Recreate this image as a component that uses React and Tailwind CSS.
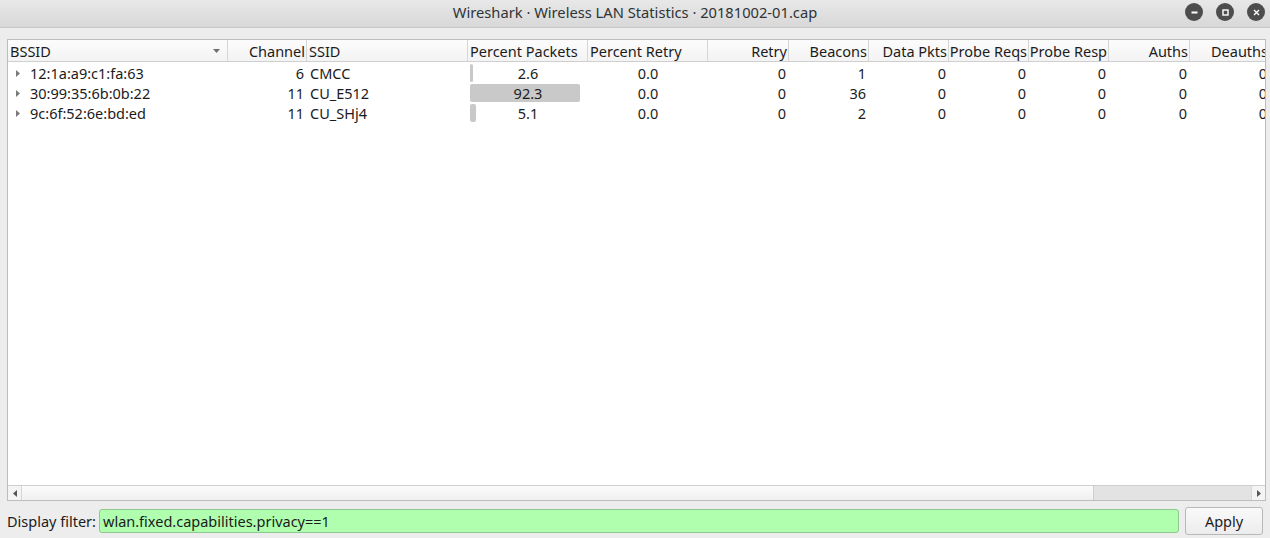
import React from 'react';

const columns = [
    { key: 'bssid', label: 'BSSID', width: 220, align: 'left' },
    { key: 'channel', label: 'Channel', width: 79, align: 'right' },
    { key: 'ssid', label: 'SSID', width: 161, align: 'left' },
    { key: 'pct', label: 'Percent Packets', width: 120, align: 'left' },
    { key: 'retryPct', label: 'Percent Retry', width: 120, align: 'left' },
    { key: 'retry', label: 'Retry', width: 81, align: 'right' },
    { key: 'beacons', label: 'Beacons', width: 80, align: 'right' },
    { key: 'data', label: 'Data Pkts', width: 80, align: 'right' },
    { key: 'probeReq', label: 'Probe Reqs', width: 80, align: 'right' },
    { key: 'probeResp', label: 'Probe Resp', width: 80, align: 'right' },
    { key: 'auths', label: 'Auths', width: 81, align: 'right' },
    { key: 'deauths', label: 'Deauths', width: 80, align: 'right' },
];

const rows = [
    { bssid: '12:1a:a9:c1:fa:63', channel: 6, ssid: 'CMCC', pct: 2.6, beacons: 1 },
    { bssid: '30:99:35:6b:0b:22', channel: 11, ssid: 'CU_E512', pct: 92.3, beacons: 36 },
    { bssid: '9c:6f:52:6e:bd:ed', channel: 11, ssid: 'CU_SHj4', pct: 5.1, beacons: 2 },
];

const WinButton = ({ children }) => (
    <div className="w-[18px] h-[18px] rounded-full bg-[#4d4d4d] flex items-center justify-center">
        <svg width="9" height="9" viewBox="0 0 9 9">{children}</svg>
    </div>
);

const Cell = ({ col, children }) => (
    <div
        className={`shrink-0 h-full flex items-center ${col.align === 'right' ? 'justify-end pr-[3px]' : 'pl-[3px]'}`}
        style={{ width: col.width }}
    >
        {children}
    </div>
);

export default function App() {
    return (
        <div
            className="w-[1270px] h-[538px] bg-[#ededed] flex flex-col text-[14.5px] leading-none text-[#1b1b1b] overflow-hidden"
            style={{ fontFamily: '"Noto Sans", "Open Sans", sans-serif' }}
        >
            {/* title bar */}
            <div className="h-[28px] shrink-0 flex items-center bg-gradient-to-b from-[#e8e8e8] to-[#d8d8d8] border-b border-[#c9c9c9] relative">
                <div className="flex-1 text-center text-[14.7px] text-[#2e3436] pb-[3px]">
                    Wireshark · Wireless LAN Statistics · 20181002-01.cap
                </div>
                <div className="absolute right-[5px] top-[3px] flex gap-[13px]">
                    <WinButton>
                        <rect x="1.5" y="3.5" width="6" height="2" fill="#fff" />
                    </WinButton>
                    <WinButton>
                        <rect x="2" y="2" width="5" height="5" fill="none" stroke="#fff" strokeWidth="1.4" />
                    </WinButton>
                    <WinButton>
                        <path d="M2 2 L7 7 M7 2 L2 7" stroke="#fff" strokeWidth="1.4" />
                    </WinButton>
                </div>
            </div>

            {/* table frame */}
            <div className="mt-[11px] ml-[7px] w-[1259px] h-[462px] border border-[#bdbdbd] bg-white flex flex-col overflow-hidden">
                <div className="h-[22px] shrink-0 flex bg-gradient-to-b from-[#fcfcfc] to-[#f3f3f3] border-b border-[#cfcfcf]">
                    {columns.map((col) => (
                        <div
                            key={col.key}
                            className={`shrink-0 h-full flex items-center pt-[1px] border-r border-[#d6d6d6] relative ${col.align === 'right' ? 'justify-end pr-[1px]' : 'pl-[2px]'}`}
                            style={{ width: col.width }}
                        >
                            <span className="whitespace-nowrap">{col.label}</span>
                            {col.key === 'bssid' && (
                                <svg className="absolute right-[7px] top-[9px]" width="7" height="4" viewBox="0 0 7 4">
                                    <path d="M0 0 L7 0 L3.5 4 Z" fill="#707070" />
                                </svg>
                            )}
                        </div>
                    ))}
                </div>

                <div className="flex-1 flex flex-col pt-[1px]">
                    {rows.map((row) => (
                        <div key={row.bssid} className="h-[20px] flex shrink-0">
                            <Cell col={columns[0]}>
                                <svg className="ml-[5px] mr-[10px]" width="4" height="7" viewBox="0 0 4 7">
                                    <path d="M0 0 L4 3.5 L0 7 Z" fill="#7a7a7a" />
                                </svg>
                                {row.bssid}
                            </Cell>
                            <Cell col={columns[1]}>{row.channel}</Cell>
                            <Cell col={columns[2]}>{row.ssid}</Cell>
                            <div className="shrink-0 h-full relative pl-[2px] py-[1px]" style={{ width: columns[3].width }}>
                                <div
                                    className="h-full rounded-[2px] bg-[#c9c9c9]"
                                    style={{ width: Math.max(3, Math.round(row.pct * 1.19)) }}
                                />
                                <div className="absolute inset-0 flex items-center justify-center">{row.pct.toFixed(1)}</div>
                            </div>
                            <div className="shrink-0 h-full flex items-center justify-center" style={{ width: columns[4].width }}>
                                0.0
                            </div>
                            <Cell col={columns[5]}>0</Cell>
                            <Cell col={columns[6]}>{row.beacons}</Cell>
                            <Cell col={columns[7]}>0</Cell>
                            <Cell col={columns[8]}>0</Cell>
                            <Cell col={columns[9]}>0</Cell>
                            <Cell col={columns[10]}>0</Cell>
                            <Cell col={columns[11]}>0</Cell>
                        </div>
                    ))}
                </div>

                {/* horizontal scrollbar */}
                <div className="h-[15px] shrink-0 flex items-center border-t border-[#cfcfcf] bg-[#e3e3e3]">
                    <div className="w-[14px] h-full flex items-center justify-center bg-[#f4f4f4] border-r border-[#d6d6d6]">
                        <svg width="4" height="7" viewBox="0 0 4 7">
                            <path d="M4 0 L0 3.5 L4 7 Z" fill="#555" />
                        </svg>
                    </div>
                    <div className="w-[1072px] h-full bg-gradient-to-b from-[#fbfbfb] to-[#f0f0f0] border-r border-[#cfcfcf]" />
                    <div className="flex-1" />
                    <div className="w-[14px] h-full flex items-center justify-center bg-[#f4f4f4] border-l border-[#d6d6d6]">
                        <svg width="4" height="7" viewBox="0 0 4 7">
                            <path d="M0 0 L4 3.5 L0 7 Z" fill="#555" />
                        </svg>
                    </div>
                </div>
            </div>

            {/* filter row */}
            <div className="flex items-center mt-[6px] h-[28px] pl-[7px] pr-[7px]">
                <span className="w-[92px] shrink-0 whitespace-nowrap">Display filter:</span>
                <div className="w-[1080px] h-[24px] rounded-[3px] bg-[#afffaf] border border-[#8fc98f] flex items-center pl-[3px]">
                    wlan.fixed.capabilities.privacy==1
                </div>
                <button className="ml-[6px] w-[78px] h-[28px] rounded-[3px] border border-[#b8b8b8] bg-gradient-to-b from-[#fafafa] to-[#ececec] text-[#1b1b1b]">
                    Apply
                </button>
            </div>
        </div>
    );
}
